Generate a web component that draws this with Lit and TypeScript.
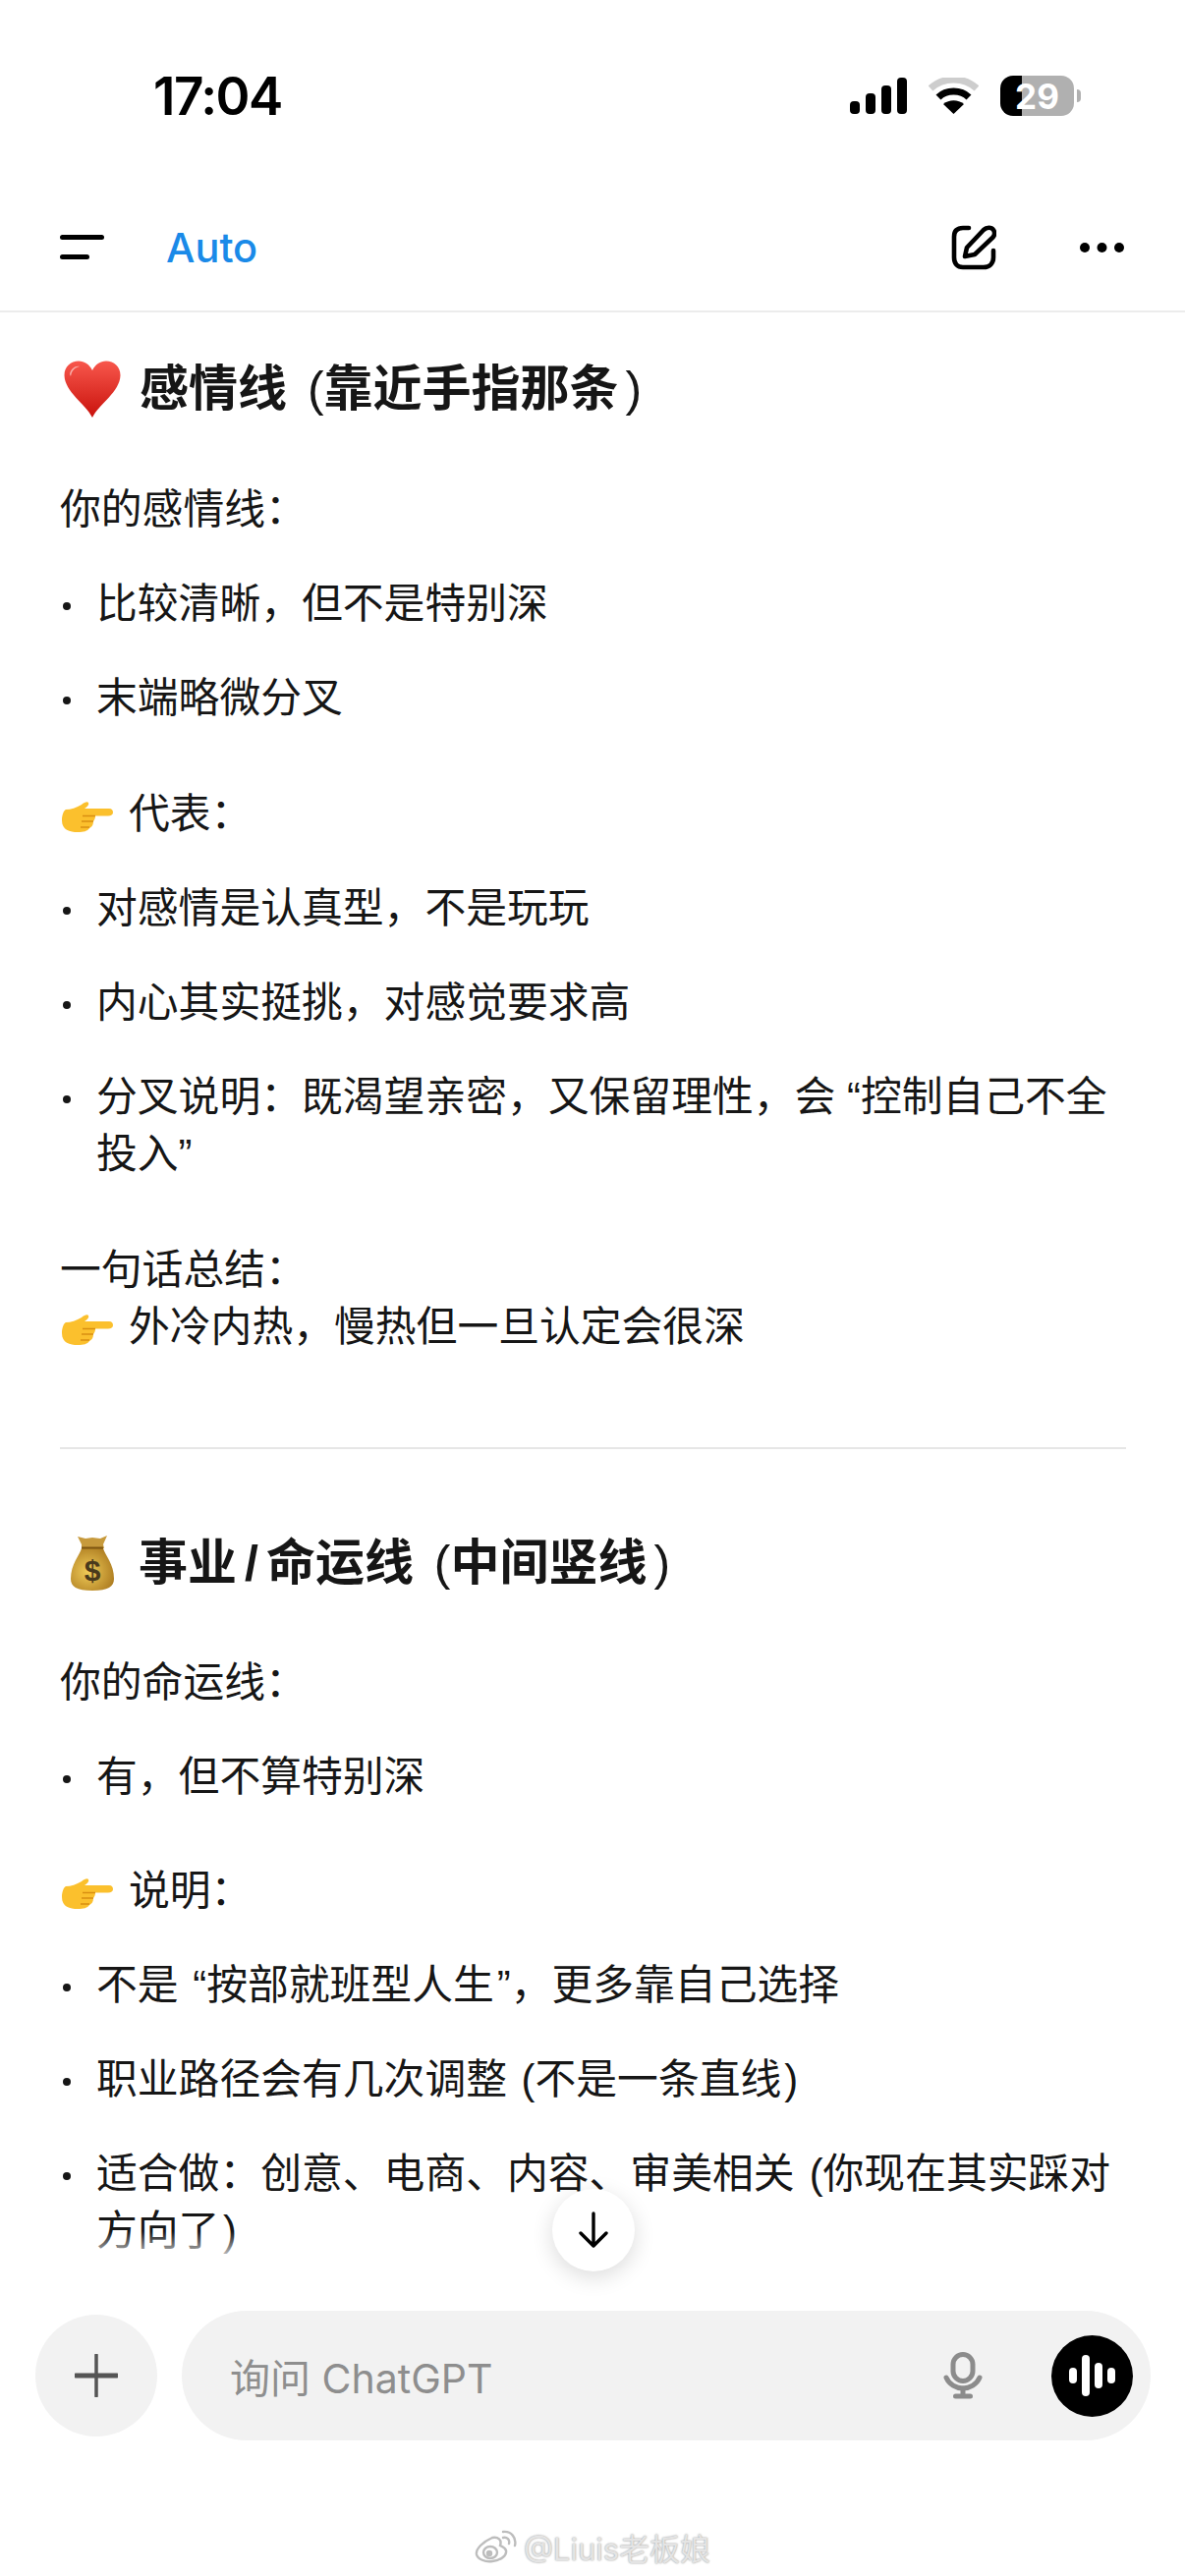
import { LitElement, html, css, TemplateResult } from 'lit';
import { customElement } from 'lit/decorators.js';

const heart = html`<svg class="emoji heart" viewBox="0 0 58 58">
  <defs>
    <linearGradient id="hg" x1="0" y1="0" x2="0" y2="1">
      <stop offset="0" stop-color="#f8574c" />
      <stop offset="1" stop-color="#c9120c" />
    </linearGradient>
  </defs>
  <path d="M29 58C22 44 1 32 .5 15 .5 6 7 .5 15 .5 21 .5 26 4 29 10 32 4 37 .5 43 .5 51 .5 57.500 6 57.500 15 57 32 36 44 29 58Z" fill="url(#hg)" />
  <path d="M6 14C7 8 12 5 16 6 11 7 8 10 7 16Z" fill="#fff" opacity=".55" />
</svg>`;

const hand = html`<svg class="emoji hand" viewBox="0 0 52 32">
  <path d="M4 9C9 9 15 7 20 4 23 1.500 26 .5 27 2 28 4 26 6 23 8H48C51 8 52 10 52 12 52 14 50 15.500 47 15.500H34C34 18 33 20 32 21 32 25 30 27 28 28 26 31 22 32 16 32 8 32 0 30 0 20 0 14 2 10 4 9Z" fill="#fbc02d" />
  <path d="M21 15.500H34M20 21H32M19 27H28" stroke="#d98f12" stroke-width="1.500" fill="none" />
</svg>`;

const moneyBag = html`<svg class="emoji bag" viewBox="0 0 44 56">
  <defs>
    <radialGradient id="bg" cx=".4" cy=".55" r=".7">
      <stop offset="0" stop-color="#f0cb58" />
      <stop offset="1" stop-color="#a8761c" />
    </radialGradient>
  </defs>
  <path d="M7 1 15 3 22 2 30 3 37 0 33 9 34 13H11L11 9Z" fill="#c79a3c" />
  <path d="M11 13H33C35 20 44 29 44 44 44 52 38 56 22 56 6 56 0 52 0 44 0 29 9 20 11 13Z" fill="url(#bg)" />
  <path d="M11 12.500H33" stroke="#7d5510" stroke-width="2" />
  <text x="22" y="46" text-anchor="middle" font-family="Liberation Sans, sans-serif" font-size="30" fill="#4a3a1c">$</text>
</svg>`;

const point = html`<span class="point">${hand}</span>`;

@customElement('app-root')
export class AppRoot extends LitElement {
  private bullets(items: (string | TemplateResult)[]) {
    return html`<ul>${items.map((t) => html`<li><span>${t}</span></li>`)}</ul>`;
  }

  render() {
    return html`
      <div class="status">
        <span class="time">17:04</span>
        <div class="status-icons">
          <svg class="signal" viewBox="0 0 58 37">
            <rect x="0" y="24" width="10" height="13" rx="4" />
            <rect x="16" y="16" width="10" height="21" rx="4" />
            <rect x="32" y="8" width="10" height="29" rx="4" />
            <rect x="48" y="0" width="10" height="37" rx="4" />
          </svg>
          <svg class="wifi" viewBox="0 0 51 37">
            <path d="M2 11C15 -1 36 -1 49 11" stroke="#cdcdcd" stroke-width="7" fill="none" />
            <path d="M10 20C18 12 33 12 41 20" stroke="#000" stroke-width="7" fill="none" />
            <path d="M25.500 37 15 27C21 22 30 22 36 27Z" />
          </svg>
          <div class="battery">
            <div class="battery-body"><span>29</span></div>
            <div class="battery-nub"></div>
          </div>
        </div>
      </div>

      <nav>
        <svg class="menu" viewBox="0 0 46 26">
          <rect x="0" y="0" width="45" height="5" rx="2.500" />
          <rect x="0" y="20" width="30" height="5" rx="2.500" />
        </svg>
        <span class="auto">Auto</span>
        <span class="spacer"></span>
        <svg class="compose" viewBox="0 0 46 46" fill="none" stroke="#000" stroke-width="4.600" stroke-linecap="round" stroke-linejoin="round">
          <path d="M18 3H12C6 3 3 6 3 12V33C3 39 6 43 12 43H33C39 43 43 39 43 33V26" />
          <path d="M14 32 16 23 33 5C36 2 41 2 43 5 45 8 44 11 42 13L24 30Z" />
        </svg>
        <svg class="more" viewBox="0 0 45 10">
          <circle cx="5" cy="5" r="5" />
          <circle cx="22.500" cy="5" r="5" />
          <circle cx="40" cy="5" r="5" />
        </svg>
      </nav>

      <main>
        <h2 class="first">${heart}<span>感情线 <span class="par">(</span>靠近手指那条<span class="par">)</span></span></h2>
        <p class="after-h">你的感情线：</p>
        ${this.bullets(['比较清晰，但不是特别深', '末端略微分叉'])}
        <p class="lead">${point}代表：</p>
        ${this.bullets([
          '对感情是认真型，不是玩玩',
          '内心其实挺挑，对感觉要求高',
          '分叉说明：既渴望亲密，又保留理性，会 “控制自己不全投入”',
        ])}
        <p class="lead">一句话总结：<br />${point}外冷内热，慢热但一旦认定会很深</p>
        <hr />
        <h2 class="money">${moneyBag}<span>事业<span class="slash">/</span>命运线 <span class="par">(</span>中间竖线<span class="par">)</span></span></h2>
        <p class="after-h">你的命运线：</p>
        ${this.bullets(['有，但不算特别深'])}
        <p class="lead tight">${point}说明：</p>
        ${this.bullets([
          html`不是 <span class="wide">“</span>按部就班型人生<span class="wide">”</span>，更多靠自己选择`,
          html`职业路径会有几次调整 <span class="wide">(</span>不是一条直线<span class="wide">)</span>`,
          '适合做：创意、电商、内容、审美相关 \u200A(你现在其实踩对方向了\u200A)',
        ])}
        <div class="fade"></div>
      </main>

      <button class="down" aria-label="scroll down">
        <svg viewBox="0 0 32 38" fill="none" stroke="#000" stroke-width="3.400" stroke-linecap="round" stroke-linejoin="round">
          <path d="M16 2V35M3 22 16 35 29 22" />
        </svg>
      </button>

      <div class="composer">
        <div class="plus">
          <svg viewBox="0 0 44 44" stroke="#555" fill="none" stroke-linecap="round">
            <path d="M1 22H43" stroke-width="5" />
            <path d="M22 1V43" stroke-width="3.500" />
          </svg>
        </div>
        <div class="field">
          <span class="placeholder">询问 ChatGPT</span>
          <span class="spacer"></span>
          <svg class="mic" viewBox="0 0 40 48" fill="none" stroke="#8c8c8c" stroke-width="5" stroke-linecap="round">
            <rect x="10" y="2.500" width="20" height="27" rx="10" />
            <path d="M3 26C6 33 13 37 20 37 27 37 34 33 37 26" />
            <path d="M20 37V45M12.500 45H27.500" />
          </svg>
          <div class="voice">
            <svg viewBox="0 0 47 42" fill="#fff">
              <rect x="0" y="13" width="8" height="16" rx="4" />
              <rect x="13" y="0" width="8" height="42" rx="4" />
              <rect x="26" y="8" width="8" height="26" rx="4" />
              <rect x="39" y="13" width="8" height="16" rx="4" />
            </svg>
          </div>
        </div>
      </div>

      <div class="watermark">
        <svg viewBox="0 0 44 34" fill="none" stroke="#bdbdbd" stroke-width="2.400">
          <path d="M18 8C9 12 1 19 2 25 3 30 11 33 18 32 27 31 33 26 32 21 31 18 28 17 26 16 28 10 24 7 18 8Z" />
          <ellipse cx="16" cy="23" rx="7" ry="6" />
          <circle cx="15" cy="24" r="2" fill="#bdbdbd" />
          <path d="M29 2C37 1 43 8 41 16M29 8C33 7 36 10 35 14" stroke-linecap="round" />
        </svg>
        <span>@Liuis老板娘</span>
      </div>
    `;
  }

  static styles = css`
    :host {
      display: flex;
      flex-direction: column;
      position: relative;
      width: 1206px;
      height: 2622px;
      overflow: hidden;
      background: #fff;
      color: #161616;
      font-family: 'Inter', 'Noto Sans CJK SC', sans-serif;
    }

    .status {
      flex: none;
      height: 130px;
      display: flex;
      align-items: flex-start;
      justify-content: space-between;
      padding: 75px 106px 0 156px;
      box-sizing: border-box;
    }

    .time {
      font-size: 53px;
      line-height: 46px;
      font-weight: 600;
      letter-spacing: -1.500px;
      color: #000;
    }

    .status-icons {
      display: flex;
      align-items: center;
      height: 45px;
    }

    .signal {
      width: 58px;
      height: 37px;
      margin-right: 22px;
    }

    .wifi {
      width: 51px;
      height: 37px;
      margin-right: 22px;
    }

    .battery {
      display: flex;
      align-items: center;
      gap: 3px;
    }

    .battery-body {
      width: 75px;
      height: 41px;
      border-radius: 13px;
      background: linear-gradient(90deg, #000 22px, #b0b0b0 22px);
      display: flex;
      align-items: center;
      justify-content: center;
      color: #fff;
      font-size: 35px;
      font-weight: 700;
    }

    .battery-nub {
      width: 4px;
      height: 13px;
      border-radius: 0 4px 4px 0;
      background: #b0b0b0;
    }

    nav {
      flex: none;
      height: 188px;
      display: flex;
      align-items: center;
      padding: 58px 62px 0 61px;
      box-sizing: border-box;
      border-bottom: 2px solid #ececec;
    }

    .menu {
      width: 46px;
      height: 26px;
      margin-right: 62px;
    }

    .auto {
      font-size: 41.500px;
      font-weight: 500;
      color: #1a8ae8;
      line-height: 50px;
    }

    .spacer {
      flex: 1;
    }

    .compose {
      width: 46px;
      height: 46px;
      margin-right: 85px;
    }

    .more {
      width: 45px;
      height: 10px;
    }

    main {
      flex: 1;
      min-height: 0;
      position: relative;
      overflow: hidden;
      padding: 0 60px 0 61px;
      font-family: 'Liberation Sans', 'Noto Sans CJK SC', sans-serif;
      font-size: 41.800px;
      line-height: 58px;
    }

    h2 {
      display: flex;
      align-items: center;
      margin: 0;
      font-size: 50px;
      line-height: 70px;
      font-weight: 700;
      white-space: nowrap;
    }

    h2.first {
      margin-top: 43px;
    }

    h2.money {
      margin-top: 81px;
    }

    .par {
      font-weight: 400;
      margin-left: 7px;
    }

    .wide {
      margin-left: 3px;
    }

    .slash {
      margin: 0 8px;
    }

    .emoji {
      flex: none;
    }

    .heart {
      width: 58px;
      height: 58px;
      margin: 0 19px 0 4px;
    }

    .bag {
      width: 44px;
      height: 56px;
      margin: 0 25px 0 11px;
    }

    p {
      margin: 0;
    }

    .after-h {
      margin-top: 58.500px;
    }

    .lead {
      margin-top: 60px;
    }

    .lead.tight {
      margin-top: 58px;
    }

    .point {
      display: inline-block;
      width: 70px;
      vertical-align: -4px;
    }

    .hand {
      width: 52px;
      height: 32px;
      display: block;
      margin-left: 2px;
    }

    ul {
      list-style: none;
      margin: 0;
      padding: 0;
    }

    li {
      display: flex;
      margin-top: 38px;
    }

    li::before {
      content: '';
      flex: none;
      width: 8px;
      height: 8px;
      border-radius: 50%;
      background: #161616;
      margin: 27px 26px 0 3px;
    }

    hr {
      border: none;
      height: 2px;
      background: #e6e6e6;
      margin: 93px 0 0;
    }

    .fade {
      position: absolute;
      left: 0;
      right: 0;
      bottom: 0;
      height: 34px;
      background: linear-gradient(rgba(255, 255, 255, 0), #fff);
    }

    .down {
      position: absolute;
      left: 562px;
      top: 2228px;
      width: 84px;
      height: 84px;
      padding: 0;
      border: none;
      border-radius: 50%;
      background: #fff;
      box-shadow: 0 6px 22px rgba(0, 0, 0, 0.14);
      display: flex;
      align-items: center;
      justify-content: center;
    }

    .down svg {
      width: 32px;
      height: 38px;
    }

    .composer {
      flex: none;
      display: flex;
      align-items: center;
      gap: 25px;
      padding: 0 35px 0 36px;
      margin-top: 47px;
    }

    .plus {
      flex: none;
      width: 124px;
      height: 124px;
      border-radius: 50%;
      background: #f2f2f2;
      display: flex;
      align-items: center;
      justify-content: center;
    }

    .plus svg {
      width: 44px;
      height: 44px;
    }

    .field {
      flex: 1;
      height: 132px;
      border-radius: 66px;
      background: #f2f2f2;
      display: flex;
      align-items: center;
      padding: 0 18px 0 49px;
    }

    .placeholder {
      font-size: 41px;
      color: #8e8e8e;
    }

    .mic {
      width: 40px;
      height: 48px;
      margin-right: 70px;
    }

    .voice {
      width: 83px;
      height: 83px;
      border-radius: 50%;
      background: #000;
      display: flex;
      align-items: center;
      justify-content: center;
    }

    .voice svg {
      width: 47px;
      height: 42px;
    }

    .watermark {
      flex: none;
      height: 138px;
      box-sizing: border-box;
      padding-top: 78px;
      display: flex;
      align-items: center;
      justify-content: center;
      gap: 6px;
      color: #e4e4e4;
      font-size: 31px;
      text-shadow: 0 0 2px #8a8a8a;
    }

    .watermark svg {
      width: 44px;
      height: 34px;
    }
  `;
}

declare global {
  interface HTMLElementTagNameMap {
    'app-root': AppRoot;
  }
}
